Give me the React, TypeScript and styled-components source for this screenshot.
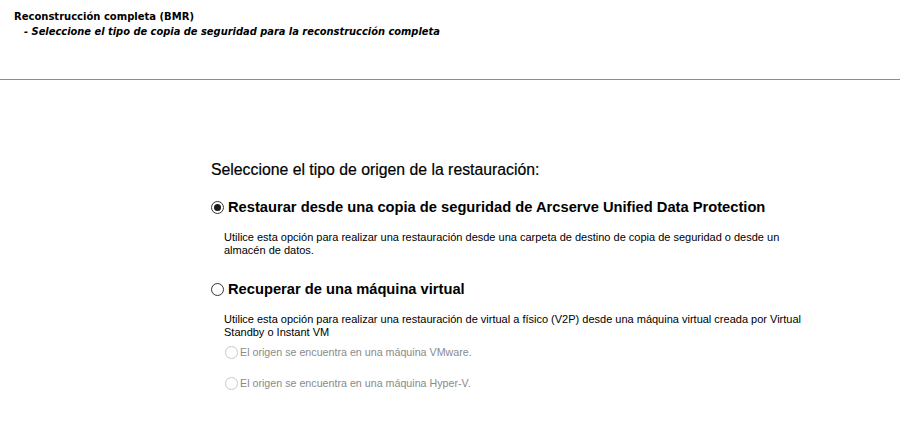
import React, { useState } from 'react';
import styled, { createGlobalStyle } from 'styled-components';

const GlobalStyle = createGlobalStyle`
  html, body {
    margin: 0;
    padding: 0;
    background: #ffffff;
  }
`;

const Page = styled.div`
  width: 900px;
  height: 445px;
  background: #ffffff;
  display: flex;
  flex-direction: column;
  overflow: hidden;
`;

const Header = styled.div`
  height: 80px;
  box-sizing: border-box;
  padding: 9px 14px 0;
  border-bottom: 1px solid #8c8c8c;
  font-family: "DejaVu Sans", Tahoma, sans-serif;
  font-size: 10px;
  line-height: 15px;
  color: #000;
`;

const HeaderTitle = styled.div`
  font-weight: bold;
`;

const HeaderSubtitle = styled.div`
  font-weight: bold;
  font-style: italic;
  font-size: 9.9px;
  padding-left: 10px;
`;

const Content = styled.div`
  padding: 81px 0 0 211px;
  display: flex;
  flex-direction: column;
  font-family: "Liberation Sans", Arial, sans-serif;
  color: #000;
`;

const Question = styled.div`
  font-size: 15.8px;
  line-height: 18px;
  margin-bottom: 20px;
  color: #000;
  -webkit-text-stroke: 0.2px #000;
`;

const Option = styled.label`
  display: flex;
  align-items: center;
  gap: 4px;
  font-size: 14.7px;
  font-weight: bold;
  line-height: 16px;
  cursor: pointer;
`;

const RadioCircle = styled.span<{ checked?: boolean; disabled?: boolean }>`
  width: 13px;
  height: 13px;
  box-sizing: border-box;
  border-radius: 50%;
  border: 1px solid ${p => (p.disabled ? '#c9c9c9' : '#333333')};
  background: #ffffff;
  display: inline-flex;
  align-items: center;
  justify-content: center;
  flex-shrink: 0;

  &::after {
    content: '';
    width: 7px;
    height: 7px;
    border-radius: 50%;
    background: #1a1a1a;
    display: ${p => (p.checked ? 'block' : 'none')};
  }
`;

const Description = styled.div`
  font-size: 11px;
  line-height: 13px;
  padding-left: 13px;
  margin-top: 16px;
  width: 580px;
`;

const SubOption = styled.label`
  display: flex;
  align-items: center;
  gap: 2px;
  padding-left: 14px;
  font-size: 10.7px;
  line-height: 13px;
  color: #8a8a8a;
`;

const Block = styled.div<{ gap: number }>`
  display: flex;
  flex-direction: column;
  margin-bottom: ${p => p.gap}px;
`;

const SubList = styled.div`
  display: flex;
  flex-direction: column;
  gap: 18px;
  margin-top: 7px;
`;

export default function App() {
  const [source, setSource] = useState<'udp' | 'vm'>('udp');

  return (
    <Page>
      <GlobalStyle />
      <Header>
        <HeaderTitle>Reconstrucción completa (BMR)</HeaderTitle>
        <HeaderSubtitle>- Seleccione el tipo de copia de seguridad para la reconstrucción completa</HeaderSubtitle>
      </Header>
      <Content>
        <Question>Seleccione el tipo de origen de la restauración:</Question>
        <Block gap={24}>
          <Option onClick={() => setSource('udp')}>
            <RadioCircle checked={source === 'udp'} />
            Restaurar desde una copia de seguridad de Arcserve Unified Data Protection
          </Option>
          <Description>
            Utilice esta opción para realizar una restauración desde una carpeta de destino de copia de seguridad o desde un almacén de datos.
          </Description>
        </Block>
        <Block gap={0}>
          <Option onClick={() => setSource('vm')}>
            <RadioCircle checked={source === 'vm'} />
            Recuperar de una máquina virtual
          </Option>
          <Description>
            Utilice esta opción para realizar una restauración de virtual a físico (V2P) desde una máquina virtual creada por Virtual Standby o Instant VM
          </Description>
          <SubList>
            <SubOption>
              <RadioCircle disabled />
              El origen se encuentra en una máquina VMware.
            </SubOption>
            <SubOption>
              <RadioCircle disabled />
              El origen se encuentra en una máquina Hyper-V.
            </SubOption>
          </SubList>
        </Block>
      </Content>
    </Page>
  );
}
